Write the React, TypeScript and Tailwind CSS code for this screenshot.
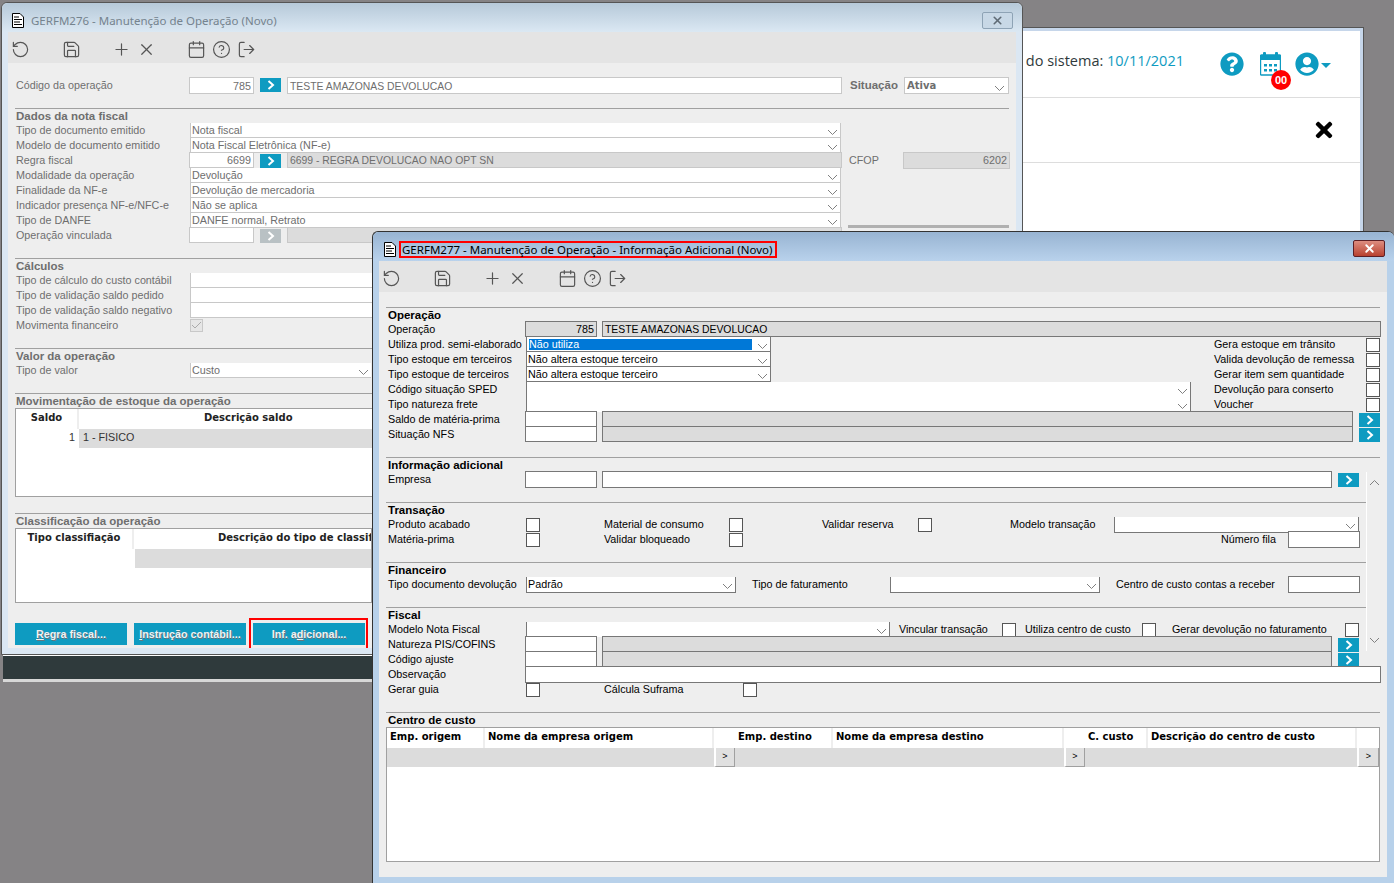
import { ReactNode } from "react";
import { twMerge } from "tailwind-merge";
import { RotateCcw, Save, Plus, X, Calendar, CircleHelp, LogOut } from "lucide-react";
import { FaQuestionCircle, FaUserCircle, FaTimes } from "react-icons/fa";

const Chevron = ({ className }: { className?: string }) => (
  <svg width="11" height="7" viewBox="0 0 11 7" className={className}>
    <polyline points="1,1 5.5,5.5 10,1" fill="none" stroke="#808080" strokeWidth="1" />
  </svg>
);

const Go = ({ off }: { off?: boolean }) => (
  <div className={twMerge("flex h-[14px] w-[21px] shrink-0 items-center justify-center bg-[#0e9bc1]", off && "bg-[#b9c1c4]")}>
    <svg width="8" height="10" viewBox="0 0 8 10">
      <polyline points="1.5,1 6,5 1.5,9" fill="none" stroke="#fff" strokeWidth="2" />
    </svg>
  </div>
);

const DocIcon = () => (
  <svg width="12" height="15" viewBox="0 0 12 15" className="shrink-0">
    <path d="M0.5 0.5H8L11.5 4V14.5H0.5Z" fill="#fff" stroke="#000" />
    <path d="M2 4H7M2 6.5H10M2 9H8M2 11.5H10" stroke="#000" strokeWidth="1" />
  </svg>
);

const Toolbar = () => (
  <div className="flex h-[31px] items-center bg-[#e4e4e4] pl-[3px] pt-[3px] text-[#555]">
    <RotateCcw size={19} strokeWidth={1.5} />
    <Save size={19} strokeWidth={1.5} className="ml-[32px]" />
    <Plus size={19} strokeWidth={1.5} className="ml-[31px]" />
    <X size={19} strokeWidth={1.5} className="ml-[6px]" />
    <Calendar size={19} strokeWidth={1.5} className="ml-[31px]" />
    <CircleHelp size={19} strokeWidth={1.5} className="ml-[6px]" />
    <LogOut size={19} strokeWidth={1.5} className="ml-[6px]" />
  </div>
);

const Section = ({ title, children, className, titleClass }: { title: string; children: ReactNode; className?: string; titleClass?: string }) => (
  <div className={twMerge("border-t border-[#a0a0a0] pb-[15px]", className)}>
    <div className={twMerge("h-[14px] pl-[1px] text-[11.5px] leading-[15px] font-bold whitespace-nowrap", titleClass)}>{title}</div>
    {children}
  </div>
);

const Row = ({ children }: { children: ReactNode }) => <div className="flex h-[15px] items-center whitespace-nowrap [&>span]:shrink-0">{children}</div>;

const Box = ({ className, children }: { className?: string; children?: ReactNode }) => (
  <div className={twMerge("relative flex h-[16px] shrink-0 items-center self-end overflow-hidden border bg-white px-[2px]", className)}>{children}</div>
);

const Select = ({ className, children, line }: { className?: string; children?: ReactNode; line: string }) => (
  <div className={twMerge("relative flex h-[15px] shrink-0 items-center border-x border-b bg-white pl-[1px]", line, className)}>
    {children}
    <Chevron className="absolute right-[2px] top-[6px]" />
  </div>
);

const Check = ({ className }: { className?: string }) => <div className={twMerge("h-[14px] w-[14px] shrink-0 border border-[#555] bg-white", className)} />;

const Window276 = () => {
  const line = "border-[#c8c8c8]";
  const box = "border-[#c8c8c8]";
  return (
    <div className="absolute left-[1px] top-[2px] z-10 flex h-[653px] w-[1022px] flex-col rounded-t-[6px] border border-[#555] bg-[#dbe7f3]">
      <div className="flex h-[29px] shrink-0 items-center rounded-t-[6px] bg-gradient-to-b from-[#b6c9d9] to-[#dbe8f3] pl-[10px] pr-[9px] pt-[6px]">
        <DocIcon />
        <span className="ml-[7px] text-[11.5px] text-[#75838e] font-['Noto_Sans',sans-serif]">GERFM276 - Manutenção de Operação (Novo)</span>
        <div className="ml-auto flex h-[17px] w-[31px] items-center justify-center rounded-[2px] border border-[#8ea3b5] bg-[#c8d8e6]">
          <X size={13} strokeWidth={3} className="text-[#5f6b75]" />
        </div>
      </div>
      <div className="mx-[6px] mb-[6px] flex-1 overflow-hidden bg-[#eeeeee] font-['Liberation_Sans',sans-serif] text-[10.75px] text-[#6e6e6e]">
        <Toolbar />
        <div className="px-[7px] pt-[15px]">
          <div className="mb-[15px] flex h-[15px] items-center whitespace-nowrap">
            <span className="w-[174px] shrink-0 pl-[1px]">Código da operação</span>
            <Box className={twMerge("h-[17px] w-[65px] justify-end self-center pt-[2px]", box)}>785</Box>
            <div className="ml-[6px] -mt-[1px]"><Go /></div>
            <Box className={twMerge("ml-[6px] h-[17px] w-[555px] self-center pt-[2px] text-[10.4px]", box)}>TESTE AMAZONAS DEVOLUCAO</Box>
            <span className="ml-[8px] w-[54px] shrink-0 text-[11.5px] font-bold">Situação</span>
            <div className={twMerge("relative flex h-[17px] w-[105px] items-center border bg-white px-[2px] text-[10px] font-bold font-['DejaVu_Sans',sans-serif]", box)}>
              Ativa
              <Chevron className="absolute right-[3px] top-[7px]" />
            </div>
          </div>
          <Section title="Dados da nota fiscal">
            <Row><span className="w-[175px] pl-[1px]">Tipo de documento emitido</span><Select line={line} className="w-[651px]">Nota fiscal</Select></Row>
            <Row><span className="w-[175px] pl-[1px]">Modelo de documento emitido</span><Select line={line} className="w-[651px]">Nota Fiscal Eletrônica (NF-e)</Select></Row>
            <Row>
              <span className="w-[174px] pl-[1px]">Regra fiscal</span>
              <Box className={twMerge("w-[65px] justify-end pt-[1px]", box)}>6699</Box>
              <div className="ml-[6px]"><Go /></div>
              <Box className={twMerge("ml-[6px] w-[555px] bg-[#dcdcdc] pt-[1px] text-[10.4px]", box)}>6699 - REGRA DEVOLUCAO NAO OPT SN</Box>
              <span className="ml-[7px] w-[54px]">CFOP</span>
              <Box className={twMerge("h-[17px] w-[107px] justify-end self-center bg-[#dcdcdc]", box)}>6202</Box>
            </Row>
            <Row><span className="w-[175px] pl-[1px]">Modalidade da operação</span><Select line={line} className="w-[651px]">Devolução</Select></Row>
            <Row><span className="w-[175px] pl-[1px]">Finalidade da NF-e</span><Select line={line} className="w-[651px]">Devolução de mercadoria</Select></Row>
            <Row><span className="w-[175px] pl-[1px]">Indicador presença NF-e/NFC-e</span><Select line={line} className="w-[651px]">Não se aplica</Select></Row>
            <Row>
              <span className="w-[175px] pl-[1px]">Tipo de DANFE</span>
              <Select line={line} className="w-[651px]">DANFE normal, Retrato</Select>
              <div className="ml-[7px] h-[3px] w-[161px] self-end bg-[#b0b0b0]" />
            </Row>
            <Row>
              <span className="w-[174px] pl-[1px]">Operação vinculada</span>
              <Box className={twMerge("w-[65px]", box)} />
              <div className="ml-[6px]"><Go off /></div>
              <Box className={twMerge("ml-[6px] w-[555px] bg-[#dcdcdc]", box)} />
            </Row>
          </Section>
          <Section title="Cálculos">
            <Row><span className="w-[175px] pl-[1px]">Tipo de cálculo do custo contábil</span><Select line={line} className="w-[651px]" /></Row>
            <Row><span className="w-[175px] pl-[1px]">Tipo de validação saldo pedido</span><Select line={line} className="w-[651px]" /></Row>
            <Row><span className="w-[175px] pl-[1px]">Tipo de validação saldo negativo</span><Select line={line} className="w-[651px]" /></Row>
            <Row>
              <span className="w-[175px] pl-[1px]">Movimenta financeiro</span>
              <div className="flex h-[13px] w-[13px] items-center justify-center border border-[#c8c8c8] bg-[#e6e6e6]">
                <svg width="11" height="9" viewBox="0 0 11 9"><polyline points="1,4 4,7 10,1" fill="none" stroke="#aaa" strokeWidth="1" /></svg>
              </div>
            </Row>
          </Section>
          <Section title="Valor da operação">
            <Row><span className="w-[175px] pl-[1px]">Tipo de valor</span><Select line={line} className="w-[181px] border-r-0">Custo</Select></Row>
          </Section>
          <Section title="Movimentação de estoque da operação" className="pb-[16px]">
            <div className="h-[89px] border border-[#a0a0a0] bg-white text-[#333]">
              <div className="flex h-[20px] items-center text-[10px] font-bold font-['DejaVu_Sans',sans-serif] text-[#222]">
                <span className="h-full w-[63px] border-r-2 border-[#eee] pt-[1px] text-center">Saldo</span>
                <span className="-mt-[3px] pl-[125px] whitespace-nowrap">Descrição saldo</span>
              </div>
              <div className="flex h-[19px] items-center">
                <span className="w-[59px] pb-[2px] text-right">1</span>
                <span className="ml-[4px] flex h-full flex-1 items-center bg-[#dcdcdc] pb-[2px] pl-[4px]">1 - FISICO</span>
              </div>
            </div>
          </Section>
          <Section title="Classificação da operação" className="pb-0">
            <div className="h-[75px] w-[357px] overflow-hidden border border-[#a0a0a0] bg-white">
              <div className="flex h-[20px] items-center text-[10px] font-bold font-['DejaVu_Sans',sans-serif] text-[#222]">
                <span className="h-full w-[118px] shrink-0 border-r-2 border-[#eee] pt-[1px] text-center">Tipo classifiação</span>
                <span className="-mt-[3px] pl-[84px] whitespace-nowrap">Descrição do tipo de classif</span>
              </div>
              <div className="ml-[119px] h-[19px] bg-[#dcdcdc]" />
            </div>
          </Section>
          <div className="mt-[20px] flex gap-[7px] text-[10.75px] font-bold text-[#eef2f4] [text-shadow:1px_1px_0_#66767e]">
            <div className="flex h-[22px] w-[112px] items-center justify-center bg-[#0e9bc1]"><span><u>R</u>egra fiscal...</span></div>
            <div className="flex h-[22px] w-[112px] items-center justify-center bg-[#0e9bc1]"><span><u>I</u>nstrução contábil...</span></div>
            <div className="relative flex h-[22px] w-[112px] items-center justify-center bg-[#0e9bc1]">
              <span>Inf. a<u>d</u>icional...</span>
              <span className="absolute -left-[4px] -right-[3px] -top-[5px] -bottom-[5px] border-2 border-[#f00]" />
            </div>
          </div>
        </div>
      </div>
    </div>
  );
};

const tableHead = [
  "Emp. origem",
  "Nome da empresa origem",
  "",
  "Emp. destino",
  "Nome da empresa destino",
  "",
  "C. custo",
  "Descrição do centro de custo",
  "",
];

const Window277 = () => {
  const line = "border-[#777]";
  const box = "border-[#777]";
  const wt = "pl-[2px]";
  return (
    <div className="absolute left-[372px] top-[231px] z-20 flex h-[652px] w-[1022px] flex-col rounded-t-[6px] border-l border-t border-[#333] bg-[#b8d1ea]">
      <div className="relative flex h-[29px] shrink-0 items-center rounded-t-[6px] bg-gradient-to-b from-[#98b4d2] to-[#b9d2ec] pl-[11px] pt-[6px]">
        <DocIcon />
        <div className="ml-[3px] flex h-[17px] w-[378px] items-center border-2 border-[#f00] pl-[1px] text-[11.5px] text-black font-['Noto_Sans',sans-serif] whitespace-nowrap">
          GERFM277 - Manutenção de Operação - Informação Adicional (Novo)
        </div>
        <div className="absolute left-[980px] top-[8px] flex h-[17px] w-[32px] items-center justify-center rounded-[2px] border border-[#5c1f25] bg-gradient-to-b from-[#dd8d80] to-[#b8402f]">
          <X size={13} strokeWidth={3.5} className="text-white" />
        </div>
      </div>
      <div className="relative ml-[6px] mr-[7px] mb-[6px] flex-1 overflow-hidden bg-[#eeeeee] font-['Liberation_Sans',sans-serif] text-[10.75px] text-black">
        <Toolbar />
        <div className="px-[7px] pt-[15px]">
          <Section title="Operação" titleClass={wt}>
            <Row>
              <span className="w-[139px] pl-[2px]">Operação</span>
              <Box className={twMerge("w-[72px] justify-end bg-[#dcdcdc] pt-[1px]", box)}>785</Box>
              <Box className={twMerge("ml-[5px] w-[779px] bg-[#dcdcdc] pt-[1px] text-[10.4px]", box)}>TESTE AMAZONAS DEVOLUCAO</Box>
            </Row>
            <Row>
              <span className="w-[140px] pl-[2px]">Utiliza prod. semi-elaborado</span>
              <Select line={line} className="w-[245px]">
                <span className="ml-[1px] flex h-[11px] w-[223px] items-center bg-[#0078d7] text-white">Não utiliza</span>
              </Select>
              <span className="ml-[443px] w-[152px]">Gera estoque em trânsito</span>
              <Check />
            </Row>
            <Row>
              <span className="w-[140px] pl-[2px]">Tipo estoque em terceiros</span>
              <Select line={line} className="w-[245px]">Não altera estoque terceiro</Select>
              <span className="ml-[443px] w-[152px]">Valida devolução de remessa</span>
              <Check />
            </Row>
            <Row>
              <span className="w-[140px] pl-[2px]">Tipo estoque de terceiros</span>
              <Select line={line} className="w-[245px]">Não altera estoque terceiro</Select>
              <span className="ml-[443px] w-[152px]">Gerar item sem quantidade</span>
              <Check />
            </Row>
            <Row>
              <span className="w-[140px] pl-[2px]">Código situação SPED</span>
              <Select line={line} className="w-[665px] border-b-0" />
              <span className="ml-[23px] w-[152px]">Devolução para conserto</span>
              <Check />
            </Row>
            <Row>
              <span className="w-[140px] pl-[2px]">Tipo natureza frete</span>
              <Select line={line} className="w-[665px] border-b-0" />
              <span className="ml-[23px] w-[152px]">Voucher</span>
              <Check />
            </Row>
            <Row>
              <span className="w-[139px] pl-[2px]">Saldo de matéria-prima</span>
              <Box className={twMerge("w-[72px]", box)} />
              <Box className={twMerge("ml-[5px] w-[751px] bg-[#dcdcdc]", box)} />
              <div className="ml-[6px]"><Go /></div>
            </Row>
            <Row>
              <span className="w-[139px] pl-[2px]">Situação NFS</span>
              <Box className={twMerge("w-[72px]", box)} />
              <Box className={twMerge("ml-[5px] w-[751px] bg-[#dcdcdc]", box)} />
              <div className="ml-[6px]"><Go /></div>
            </Row>
          </Section>
          <div className="relative">
            <Section title="Informação adicional" titleClass={wt}>
              <Row>
                <span className="w-[139px] pl-[2px]">Empresa</span>
                <Box className={twMerge("h-[17px] w-[72px] self-center", box)} />
                <Box className={twMerge("ml-[5px] h-[17px] w-[730px] self-center", box)} />
                <div className="ml-[6px]"><Go /></div>
              </Row>
            </Section>
            {/* faixa de rolagem do painel interno */}
            <div className="absolute left-[980px] top-[15px] flex h-[179px] w-[14px] flex-col justify-between border-l border-white px-[2px] py-[7px]">
              <Chevron className="rotate-180" />
              <Chevron />
            </div>
            <Section title="Transação" className="mr-[14px]" titleClass={wt}>
              <Row>
                <span className="w-[140px] pl-[2px]">Produto acabado</span>
                <Check />
                <span className="ml-[64px] w-[125px]">Material de consumo</span>
                <Check />
                <span className="ml-[79px] w-[96px]">Validar reserva</span>
                <Check />
                <span className="ml-[78px] w-[104px]">Modelo transação</span>
                <Select line={line} className="h-[16px] w-[245px] self-start" />
              </Row>
              <Row>
                <span className="w-[140px] pl-[2px]">Matéria-prima</span>
                <Check />
                <span className="ml-[64px] w-[125px]">Validar bloqueado</span>
                <Check />
                <span className="ml-[478px] w-[67px]">Número fila</span>
                <Box className={twMerge("h-[17px] w-[72px] self-center", box)} />
              </Row>
            </Section>
            <Section title="Financeiro" className="mr-[14px]" titleClass={wt}>
              <Row>
                <span className="w-[140px] pl-[2px]">Tipo documento devolução</span>
                <Select line={line} className="h-[16px] w-[210px] self-start">Padrão</Select>
                <span className="ml-[16px] w-[138px]">Tipo de faturamento</span>
                <Select line={line} className="h-[16px] w-[210px] self-start" />
                <span className="ml-[16px] w-[172px]">Centro de custo contas a receber</span>
                <Box className={twMerge("h-[17px] w-[72px] self-center", box)} />
              </Row>
            </Section>
            <Section title="Fiscal" className="mr-[14px]" titleClass={wt}>
              <Row>
                <span className="w-[140px] pl-[2px]">Modelo Nota Fiscal</span>
                <Select line={line} className="w-[364px] border-b-0" />
                <span className="ml-[9px] w-[103px]">Vincular transação</span>
                <Check />
                <span className="ml-[9px] w-[117px]">Utiliza centro de custo</span>
                <Check />
                <span className="ml-[16px] w-[173px]">Gerar devolução no faturamento</span>
                <Check />
              </Row>
              <Row>
                <span className="w-[139px] pl-[2px]">Natureza PIS/COFINS</span>
                <Box className={twMerge("w-[72px]", box)} />
                <Box className={twMerge("ml-[5px] w-[730px] bg-[#dcdcdc]", box)} />
                <div className="ml-[6px]"><Go /></div>
              </Row>
              <Row>
                <span className="w-[139px] pl-[2px]">Código ajuste</span>
                <Box className={twMerge("w-[72px]", box)} />
                <Box className={twMerge("ml-[5px] w-[730px] bg-[#dcdcdc]", box)} />
                <div className="ml-[6px]"><Go /></div>
              </Row>
              <div className="relative z-10 -mr-[14px]">
                <Row>
                  <span className="w-[139px] pl-[2px]">Observação</span>
                  <Box className={twMerge("h-[17px] w-[856px] self-center", box)} />
                </Row>
              </div>
              <Row>
                <span className="w-[140px] pl-[2px]">Gerar guia</span>
                <Check />
                <span className="ml-[64px] w-[139px]">Cálcula Suframa</span>
                <Check />
              </Row>
            </Section>
          </div>
          <Section title="Centro de custo" className="pb-0" titleClass={wt}>
            <div className="h-[135px] border border-[#a0a0a0] bg-white">
              <div className="grid h-[20px] grid-cols-[98px_229px_21px_98px_231px_21px_63px_209px_22px] text-[10px] font-bold font-['DejaVu_Sans',sans-serif]">
                {tableHead.map((head, i) => (
                  <span key={i} className={twMerge("pl-[3px] pt-[1px] whitespace-nowrap", head && "border-r-2 border-[#eee]")}>{head}</span>
                ))}
              </div>
              <div className="grid h-[19px] grid-cols-[98px_229px_21px_98px_231px_21px_63px_209px_22px] bg-[#dcdcdc]">
                {tableHead.map((head, i) =>
                  head ? (
                    <span key={i} />
                  ) : (
                    <span key={i} className="flex items-center justify-center border-b border-r border-l-2 border-[#a0a0a0] border-l-[#fff] bg-[#e0e0e0] text-[9px]">&gt;</span>
                  ),
                )}
              </div>
            </div>
          </Section>
        </div>
      </div>
    </div>
  );
};

const Browser = () => (
  <div className="absolute left-[3px] top-[27px] flex h-[655px] w-[1361px] flex-col border-t border-r border-[#555] bg-[#c6d6ea] pt-[3px] pr-[3px] font-['Open_Sans',sans-serif]">
    <div className="flex flex-1 flex-col bg-white">
      <div className="flex h-[67px] shrink-0 items-center justify-end border-b border-[#ddd] pr-[29px]">
        <span className="pb-[6px] text-[14.5px] text-[#2f3a3c] whitespace-nowrap">Data do sistema: <span className="text-[#0e9bc1]">10/11/2021</span></span>
        <FaQuestionCircle size={24} className="ml-[36px] text-[#0e9bc1]" />
        <div className="relative ml-[16px] h-[24px] w-[21px]">
          <svg width="21" height="24" viewBox="0 0 21 24">
            <rect x="0.5" y="3" width="20" height="20" rx="1" fill="#fff" stroke="#0e9bc1" strokeWidth="1.4" />
            <rect x="0" y="3" width="21" height="5" fill="#0e9bc1" />
            <rect x="3" y="0" width="3" height="5" rx="1" fill="#0e9bc1" />
            <rect x="15" y="0" width="3" height="5" rx="1" fill="#0e9bc1" />
            <path d="M4 12h3v2.5H4zM9 12h3v2.5H9zM14 12h3v2.5h-3zM4 17h3v2.5H4zM9 17h3v2.5H9zM14 17h3v2.5h-3z" fill="#0e9bc1" />
          </svg>
          <span className="absolute -right-[10px] top-[18px] flex h-[20px] w-[20px] items-center justify-center rounded-full bg-[#f00] text-[11px] font-bold text-white font-['Liberation_Sans',sans-serif]">00</span>
        </div>
        <FaUserCircle size={24} className="ml-[14px] text-[#0e9bc1]" />
        <span className="ml-[2px] mt-[3px] h-0 w-0 border-x-[5px] border-t-[5px] border-x-transparent border-t-[#0e9bc1]" />
      </div>
      <div className="flex h-[65px] shrink-0 items-center justify-end border-b border-[#ddd] pr-[24px]">
        <FaTimes size={24} className="text-black" />
      </div>
    </div>
    <div className="h-[23px] shrink-0 bg-[#2f3a3c]" />
    <div className="h-[3px] shrink-0 bg-[#d8d8d8]" />
  </div>
);

const App = () => {
  return (
    <div className="relative h-[883px] w-[1394px] overflow-hidden bg-[#858385]">
      <Browser />
      <Window276 />
      <Window277 />
    </div>
  );
};

export default App;
